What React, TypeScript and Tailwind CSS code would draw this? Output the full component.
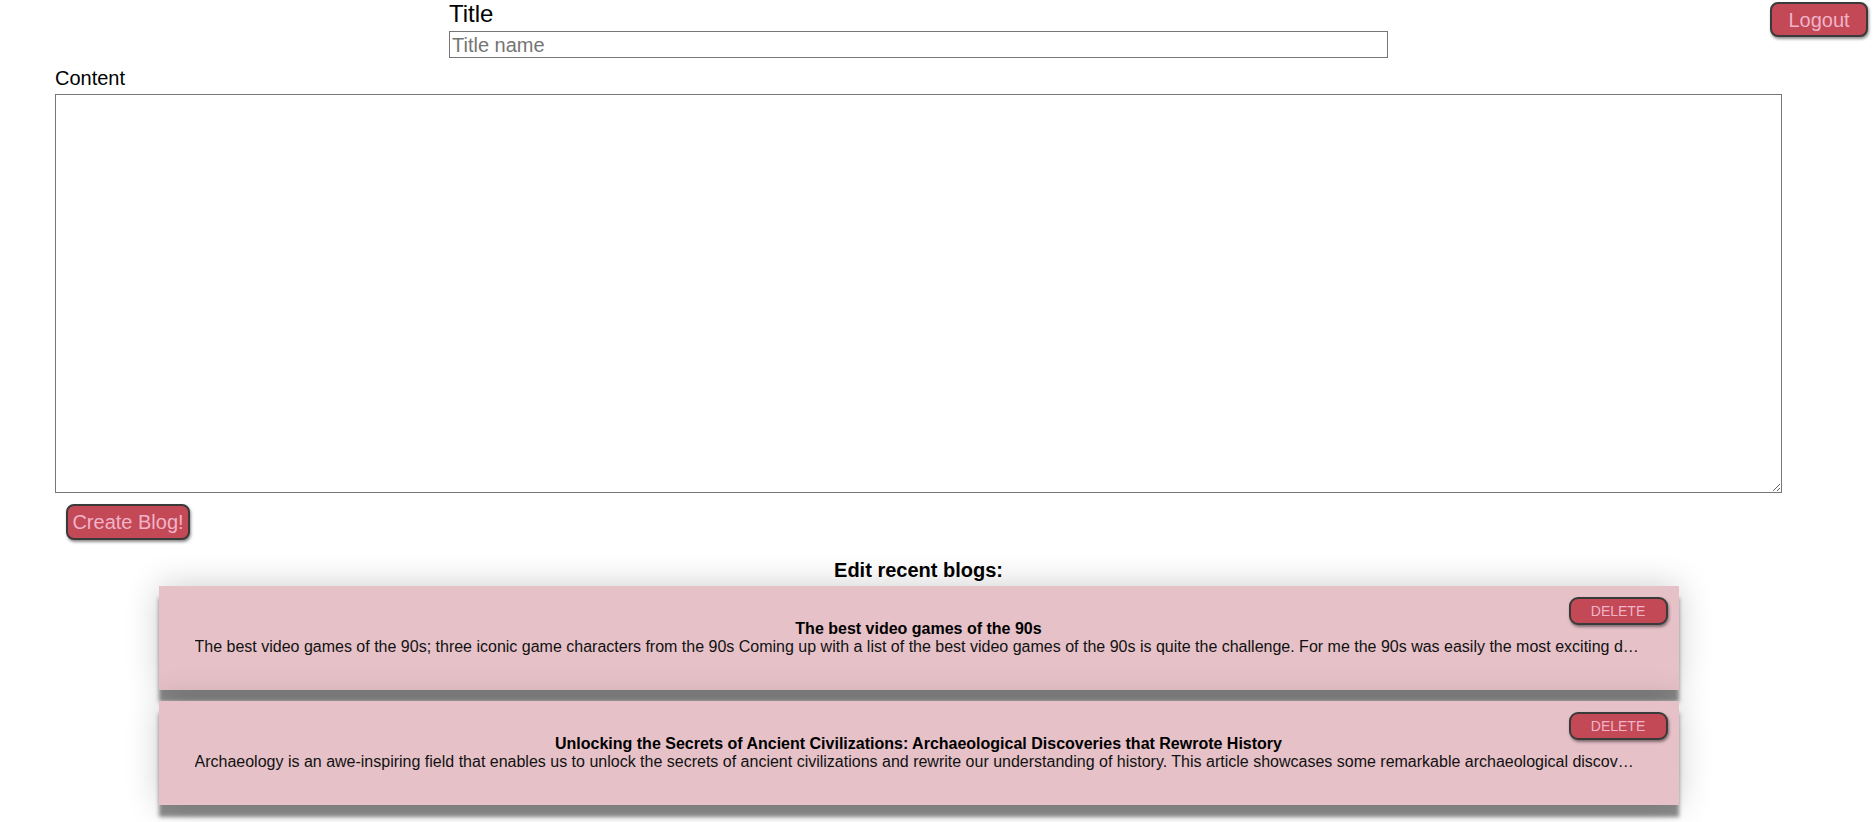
import React from 'react';

const blogs = [
  {
    title: 'The best video games of the 90s',
    body: 'The best video games of the 90s; three iconic game characters from the 90s Coming up with a list of the best video games of the 90s is quite the challenge. For me the 90s was easily the most exciting decade for gaming, with so many classics released one after another.',
  },
  {
    title: 'Unlocking the Secrets of Ancient Civilizations: Archaeological Discoveries that Rewrote History',
    body: 'Archaeology is an awe-inspiring field that enables us to unlock the secrets of ancient civilizations and rewrite our understanding of history. This article showcases some remarkable archaeological discoveries that changed everything we thought we knew.',
  },
];

function BlogCard({ title, body }: { title: string; body: string }) {
  return (
    <div className="bg-[#e6c1c8] px-[11px] pt-[11px] pb-[34px] shadow-[0_12px_4px_rgba(0,0,0,0.45),0_0_32px_rgba(0,0,0,0.2)]">
      {/* Delete */}
      <div className="flex justify-end h-[23px]">
        <button className="w-[99px] h-[28px] shrink-0 rounded-[9px] border-2 border-[#3a3a3a] bg-[#c24955] text-[14px] text-[#f1b3c9] shadow-[1px_2px_3px_rgba(0,0,0,0.45)]">
          DELETE
        </button>
      </div>
      <div className="px-[25px]">
        <div className="text-center text-[16px] leading-[18px] font-bold text-black">{title}</div>
        <div className="truncate text-center text-[16px] leading-[18px] text-[#111]">{body}</div>
      </div>
    </div>
  );
}

export default function App() {
  return (
    <div className="relative w-[1875px] min-h-[822px] bg-white text-black font-['Liberation_Sans',Arial,sans-serif]">
      {/* Logout */}
      <button className="absolute right-[7px] top-[2px] w-[98px] h-[35px] rounded-[8px] border-2 border-[#3a3a3a] bg-[#c24955] text-[20px] text-[#f1b3c9] shadow-[1px_2px_3px_rgba(0,0,0,0.45)]">
        Logout
      </button>

      <div className="w-[1837px] flex flex-col">
        {/* Title */}
        <div className="mx-auto w-[939px] flex flex-col">
          <label className="text-[24px] leading-[28px]">Title</label>
          <input
            className="mt-[3px] h-[27px] border border-[#767676] px-[2px] text-[20px] outline-none placeholder:text-[#757575]"
            placeholder="Title name"
          />
        </div>

        {/* Content */}
        <div className="px-[55px] mt-[9px] flex flex-col">
          <label className="text-[20px] leading-[23px]">Content</label>
          <textarea className="mt-[4px] h-[399px] border border-[#767676] outline-none" />
          <div>
            <button className="mt-[11px] ml-[11px] w-[124px] h-[36px] rounded-[8px] border-2 border-[#3a3a3a] bg-[#c24955] text-[20px] text-[#f1b3c9] shadow-[1px_2px_3px_rgba(0,0,0,0.45)]">
              Create Blog!
            </button>
          </div>
        </div>

        {/* Recent blogs */}
        <div className="mt-[19px] text-center text-[20px] leading-[23px] font-bold">Edit recent blogs:</div>
        <div className="mt-[4px] mx-auto w-[1520px] flex flex-col gap-[11px]">
          {blogs.map((b) => (
            <BlogCard key={b.title} title={b.title} body={b.body} />
          ))}
        </div>
      </div>
    </div>
  );
}
